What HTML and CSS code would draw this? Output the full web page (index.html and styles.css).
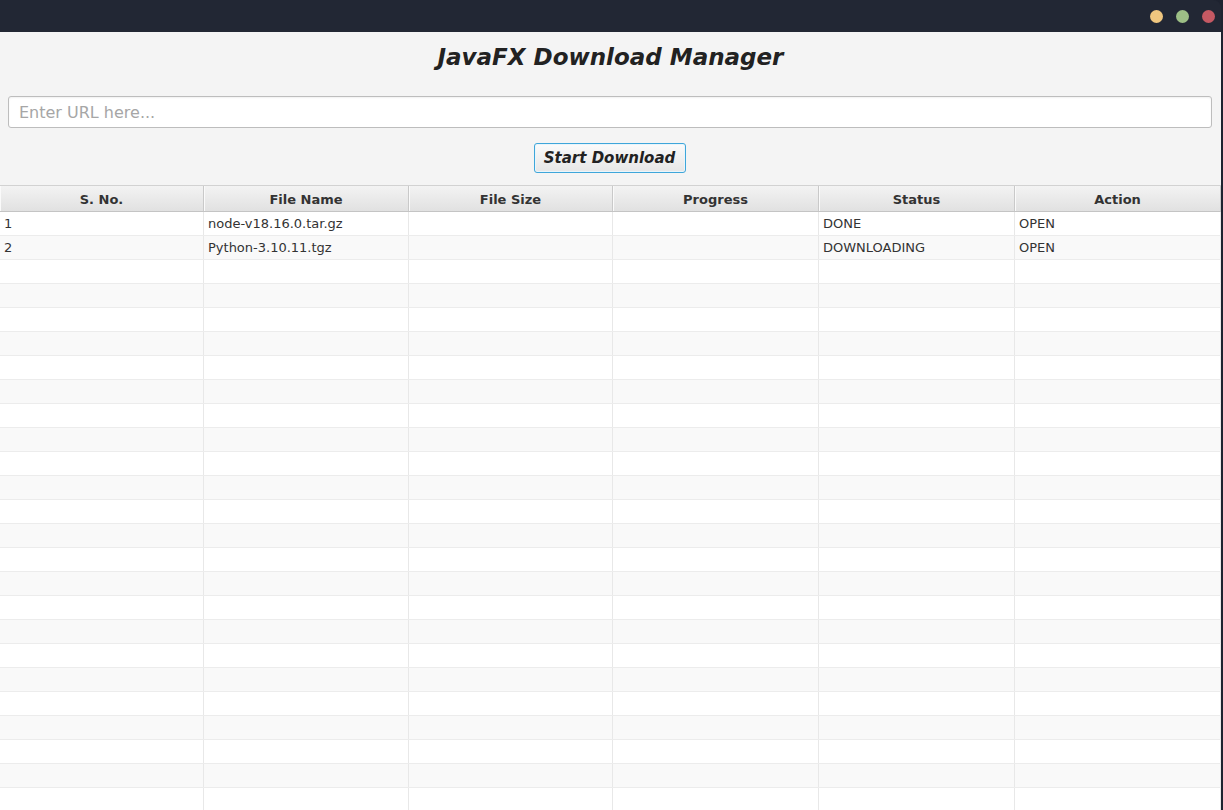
FILE: index.html
```html
<!DOCTYPE html>
<html>
<head>
<meta charset="utf-8">
<link rel="stylesheet" href="styles.css">
</head>
<body>
<div class="window">
  <div class="titlebar">
    <span class="dot dot-min"></span>
    <span class="dot dot-max"></span>
    <span class="dot dot-close"></span>
  </div>
  <div class="content">
    <h1 class="title">JavaFX Download Manager</h1>
    <div class="url-wrap"><input class="url" type="text" placeholder="Enter URL here..."></div>
    <div class="btn-wrap"><button class="btn">Start Download</button></div>
    <div class="table">
      <div class="row head">
        <div class="cell">S. No.</div>
        <div class="cell">File Name</div>
        <div class="cell">File Size</div>
        <div class="cell">Progress</div>
        <div class="cell">Status</div>
        <div class="cell">Action</div>
      </div>
      <div class="row"><div class="cell">1</div><div class="cell">node-v18.16.0.tar.gz</div><div class="cell"></div><div class="cell"></div><div class="cell">DONE</div><div class="cell">OPEN</div></div>
      <div class="row"><div class="cell">2</div><div class="cell">Python-3.10.11.tgz</div><div class="cell"></div><div class="cell"></div><div class="cell">DOWNLOADING</div><div class="cell">OPEN</div></div>
      <div class="row"><div class="cell"></div><div class="cell"></div><div class="cell"></div><div class="cell"></div><div class="cell"></div><div class="cell"></div></div>
      <div class="row"><div class="cell"></div><div class="cell"></div><div class="cell"></div><div class="cell"></div><div class="cell"></div><div class="cell"></div></div>
      <div class="row"><div class="cell"></div><div class="cell"></div><div class="cell"></div><div class="cell"></div><div class="cell"></div><div class="cell"></div></div>
      <div class="row"><div class="cell"></div><div class="cell"></div><div class="cell"></div><div class="cell"></div><div class="cell"></div><div class="cell"></div></div>
      <div class="row"><div class="cell"></div><div class="cell"></div><div class="cell"></div><div class="cell"></div><div class="cell"></div><div class="cell"></div></div>
      <div class="row"><div class="cell"></div><div class="cell"></div><div class="cell"></div><div class="cell"></div><div class="cell"></div><div class="cell"></div></div>
      <div class="row"><div class="cell"></div><div class="cell"></div><div class="cell"></div><div class="cell"></div><div class="cell"></div><div class="cell"></div></div>
      <div class="row"><div class="cell"></div><div class="cell"></div><div class="cell"></div><div class="cell"></div><div class="cell"></div><div class="cell"></div></div>
      <div class="row"><div class="cell"></div><div class="cell"></div><div class="cell"></div><div class="cell"></div><div class="cell"></div><div class="cell"></div></div>
      <div class="row"><div class="cell"></div><div class="cell"></div><div class="cell"></div><div class="cell"></div><div class="cell"></div><div class="cell"></div></div>
      <div class="row"><div class="cell"></div><div class="cell"></div><div class="cell"></div><div class="cell"></div><div class="cell"></div><div class="cell"></div></div>
      <div class="row"><div class="cell"></div><div class="cell"></div><div class="cell"></div><div class="cell"></div><div class="cell"></div><div class="cell"></div></div>
      <div class="row"><div class="cell"></div><div class="cell"></div><div class="cell"></div><div class="cell"></div><div class="cell"></div><div class="cell"></div></div>
      <div class="row"><div class="cell"></div><div class="cell"></div><div class="cell"></div><div class="cell"></div><div class="cell"></div><div class="cell"></div></div>
      <div class="row"><div class="cell"></div><div class="cell"></div><div class="cell"></div><div class="cell"></div><div class="cell"></div><div class="cell"></div></div>
      <div class="row"><div class="cell"></div><div class="cell"></div><div class="cell"></div><div class="cell"></div><div class="cell"></div><div class="cell"></div></div>
      <div class="row"><div class="cell"></div><div class="cell"></div><div class="cell"></div><div class="cell"></div><div class="cell"></div><div class="cell"></div></div>
      <div class="row"><div class="cell"></div><div class="cell"></div><div class="cell"></div><div class="cell"></div><div class="cell"></div><div class="cell"></div></div>
      <div class="row"><div class="cell"></div><div class="cell"></div><div class="cell"></div><div class="cell"></div><div class="cell"></div><div class="cell"></div></div>
      <div class="row"><div class="cell"></div><div class="cell"></div><div class="cell"></div><div class="cell"></div><div class="cell"></div><div class="cell"></div></div>
      <div class="row"><div class="cell"></div><div class="cell"></div><div class="cell"></div><div class="cell"></div><div class="cell"></div><div class="cell"></div></div>
      <div class="row"><div class="cell"></div><div class="cell"></div><div class="cell"></div><div class="cell"></div><div class="cell"></div><div class="cell"></div></div>
      <div class="row"><div class="cell"></div><div class="cell"></div><div class="cell"></div><div class="cell"></div><div class="cell"></div><div class="cell"></div></div>
    </div>
  </div>
</div>
</body>
</html>
```
FILE: styles.css
```css
* { box-sizing: border-box; }
html, body {
  margin: 0;
  padding: 0;
  height: 810px;
  overflow: hidden;
  background: #1e2330;
  font-family: "DejaVu Sans", sans-serif;
}
.window {
  width: 1221px;
  height: 810px;
  display: flex;
  flex-direction: column;
  overflow: hidden;
}
.titlebar {
  height: 32px;
  flex: none;
  background: #222734;
  display: flex;
  justify-content: flex-end;
  align-items: center;
  gap: 13px;
  padding-right: 6px;
  border-top-right-radius: 8px;
}
.dot {
  width: 13px;
  height: 13px;
  border-radius: 50%;
  display: block;
}
.dot-min { background: #efc67f; }
.dot-max { background: #9dbf86; }
.dot-close { background: #c55963; }
.content {
  flex: 1;
  background: #f4f4f4;
  display: flex;
  flex-direction: column;
  overflow: hidden;
}
.title {
  margin: 0;
  height: 64px;
  padding-top: 12px;
  text-align: center;
  font-size: 23px;
  font-weight: bold;
  font-style: italic;
  color: #222;
  line-height: 26px;
}
.url-wrap {
  padding: 0 9px 0 8px;
}
.url {
  display: block;
  width: 100%;
  height: 32px;
  border: 1px solid #bdbdbd;
  border-radius: 3px;
  background: #fff;
  padding: 1px 10px 0;
  font-family: "DejaVu Sans", sans-serif;
  font-size: 16px;
  color: #333;
  outline: none;
  box-shadow: inset 0 1px 2px rgba(0,0,0,0.06);
}
.url::placeholder { color: #a6a6a6; }
.btn-wrap {
  display: flex;
  justify-content: center;
  padding-top: 15px;
  padding-right: 2px;
  height: 57px;
}
.btn {
  width: 152px;
  height: 30px;
  border: 1px solid #3ea6da;
  border-radius: 3px;
  background: linear-gradient(#fbfbfb, #e6e6e6);
  box-shadow: inset 0 0 0 1px #e9f5fb;
  font-family: "DejaVu Sans", sans-serif;
  font-size: 15px;
  font-weight: bold;
  font-style: italic;
  color: #222;
  padding: 0;
}
.table {
  flex: 1;
  background: #fff;
  overflow: hidden;
  border-top: 1px solid #d2d2d2;
}
.row {
  display: grid;
  grid-template-columns: 204px 205px 204px 206px 196px 206px;
  height: 24px;
  border-bottom: 1px solid #ececec;
  background: #fff;
}
.row:nth-child(odd):not(.head) { background: #f9f9f9; }
.row .cell {
  border-right: 1px solid #e8e8e8;
  padding-left: 4px;
  font-size: 13px;
  line-height: 23px;
  color: #333;
  white-space: nowrap;
  overflow: hidden;
}
.row.head {
  height: 26px;
  background: linear-gradient(#f3f3f3, #e1e1e1);
  border-bottom: 1px solid #c4c4c4;
}
.row.head .cell {
  text-align: center;
  font-weight: bold;
  line-height: 25px;
  padding-top: 1px;
  padding-left: 0;
  color: #333;
  border-right: 1px solid #c9c9c9;
  box-shadow: inset 1px 0 0 #fafafa;
}
```
